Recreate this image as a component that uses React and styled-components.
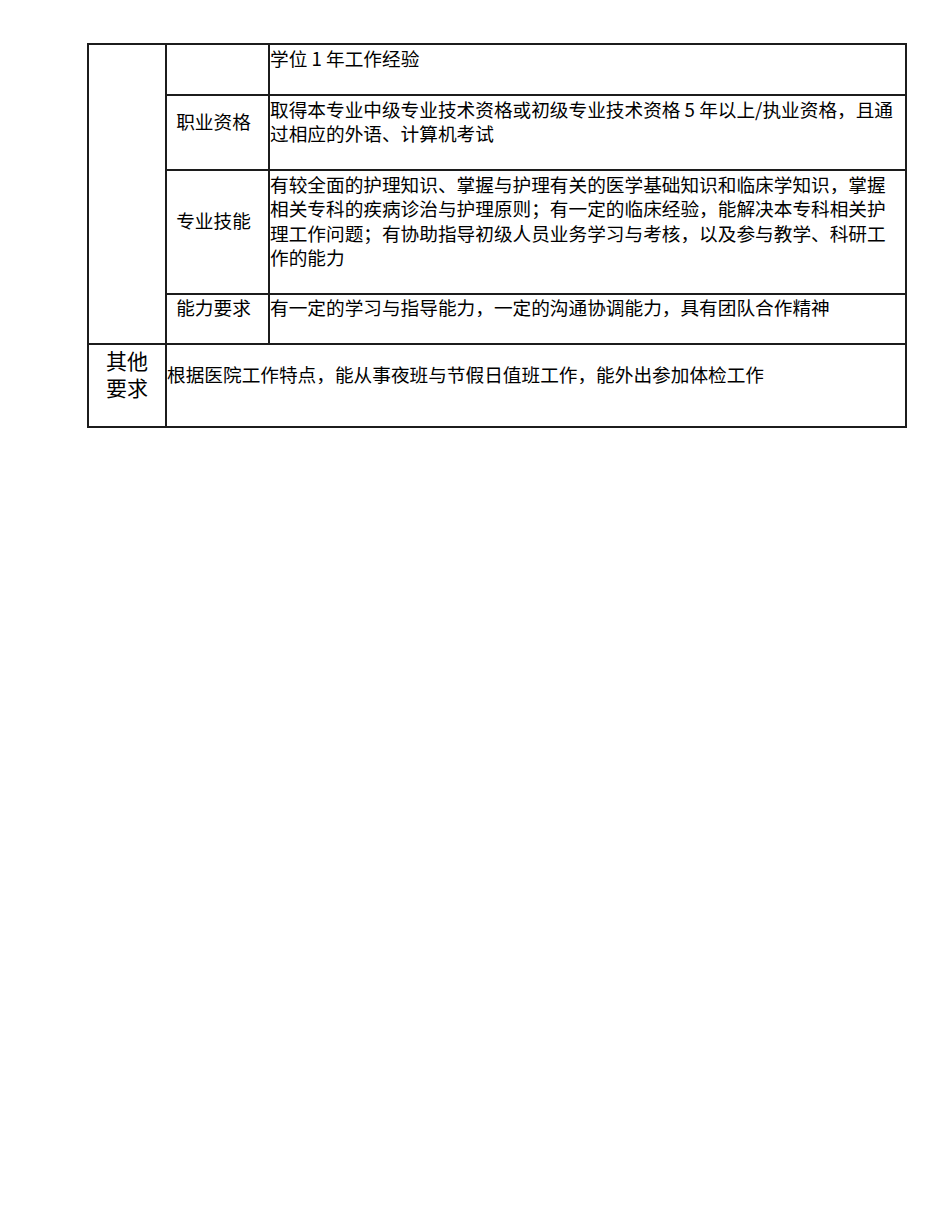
import styled, { createGlobalStyle } from "styled-components";

const GlobalStyle = createGlobalStyle`
  html, body {
    margin: 0;
    padding: 0;
    background: #fff;
  }
  body {
    font-family: "Noto Sans CJK SC", "Noto Sans", sans-serif;
    color: #000;
  }
`;

const Page = styled.div`
  width: 950px;
  height: 1230px;
  padding: 43px 0 0 87px;
  box-sizing: border-box;
`;

const Sheet = styled.div`
  display: grid;
  width: 820px;
  box-sizing: border-box;
  grid-template-columns: 76px 101px 635px;
  grid-template-rows: 49px 73px 122px 48px 81px;
  gap: 2px;
  padding: 2px;
  background: #1c1c1c;
`;

const Cell = styled.div`
  background: #fff;
  display: flex;
  align-items: center;
  justify-content: ${(p) => (p.$center ? "center" : "flex-start")};
  text-align: ${(p) => (p.$center ? "center" : "left")};
  padding: 2px ${(p) => (p.$shift ? "8px" : "0")} 25px 0;
  box-sizing: border-box;
  font-size: ${(p) => (p.$big ? "21px" : "18.67px")};
  line-height: ${(p) => (p.$big ? "27.5px" : "24.5px")};
  white-space: nowrap;
  grid-column: ${(p) => p.$col || "auto"};
  grid-row: ${(p) => p.$row || "auto"};
`;

const Lines = ({ items }) => (
  <div>
    {items.map((t, i) => (
      <div key={i}>{t}</div>
    ))}
  </div>
);

export default function App() {
  return (
    <>
      <GlobalStyle />
      <Page>
        <Sheet>
          <Cell $col="1" $row="1 / 5" />

          <Cell $col="2" $row="1" $center $shift />
          <Cell $col="3" $row="1">
            学位 1 年工作经验
          </Cell>

          <Cell $col="2" $row="2" $center $shift>
            职业资格
          </Cell>
          <Cell $col="3" $row="2">
            <Lines
              items={[
                "取得本专业中级专业技术资格或初级专业技术资格 5 年以上/执业资格，且通",
                "过相应的外语、计算机考试",
              ]}
            />
          </Cell>

          <Cell $col="2" $row="3" $center $shift>
            专业技能
          </Cell>
          <Cell $col="3" $row="3">
            <Lines
              items={[
                "有较全面的护理知识、掌握与护理有关的医学基础知识和临床学知识，掌握",
                "相关专科的疾病诊治与护理原则；有一定的临床经验，能解决本专科相关护",
                "理工作问题；有协助指导初级人员业务学习与考核，以及参与教学、科研工",
                "作的能力",
              ]}
            />
          </Cell>

          <Cell $col="2" $row="4" $center $shift>
            能力要求
          </Cell>
          <Cell $col="3" $row="4">
            有一定的学习与指导能力，一定的沟通协调能力，具有团队合作精神
          </Cell>

          <Cell $col="1" $row="5" $center $big>
            <Lines items={["其他", "要求"]} />
          </Cell>
          <Cell $col="2 / 4" $row="5">
            根据医院工作特点，能从事夜班与节假日值班工作，能外出参加体检工作
          </Cell>
        </Sheet>
      </Page>
    </>
  );
}
